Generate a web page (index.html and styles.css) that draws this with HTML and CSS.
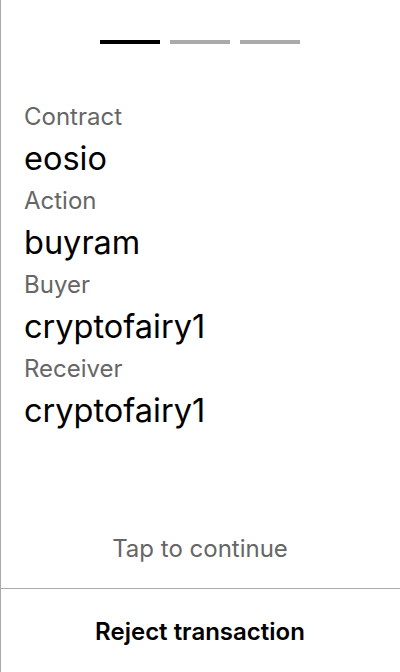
FILE: index.html
```html
<!DOCTYPE html>
<html>
<head>
<meta charset="utf-8">
<link rel="stylesheet" href="styles.css">
</head>
<body>
<div class="screen">
  <div class="progress">
    <span class="bar active"></span>
    <span class="bar"></span>
    <span class="bar"></span>
  </div>
  <div class="fields">
    <div class="label">Contract</div>
    <div class="value">eosio</div>
    <div class="label">Action</div>
    <div class="value">buyram</div>
    <div class="label">Buyer</div>
    <div class="value">cryptofairy1</div>
    <div class="label">Receiver</div>
    <div class="value">cryptofairy1</div>
  </div>
  <div class="tap">Tap to continue</div>
  <div class="footer">Reject transaction</div>
</div>
</body>
</html>
```
FILE: styles.css
```css
html, body {
  margin: 0;
  padding: 0;
  background: #fff;
}
body {
  font-family: Inter, "Noto Sans", sans-serif;
}
.screen {
  height: 672px;
  box-sizing: border-box;
  border-left: 1px solid #aaaaaa;
  display: flex;
  flex-direction: column;
}
.progress {
  display: flex;
  justify-content: center;
  gap: 10px;
  padding-top: 40px;
  margin-left: -1px;
}
.bar {
  width: 60px;
  height: 4px;
  background: #aaaaaa;
}
.bar.active {
  background: #000;
}
.fields {
  flex: 1;
  padding: 55px 0 0 23px;
}
.label {
  font-size: 24px;
  line-height: 36px;
  color: #666;
}
.value {
  font-size: 32.5px;
  line-height: 48px;
  color: #000;
}
.tap {
  text-align: center;
  font-size: 24px;
  line-height: 28px;
  color: #666;
  padding-bottom: 25px;
  margin-left: -1px;
}
.footer {
  height: 81px;
  padding-top: 2px;
  border-top: 1px solid #aaaaaa;
  display: flex;
  align-items: center;
  justify-content: center;
  font-size: 24px;
  font-weight: 600;
  color: #000;
  margin-left: -1px;
}
```
